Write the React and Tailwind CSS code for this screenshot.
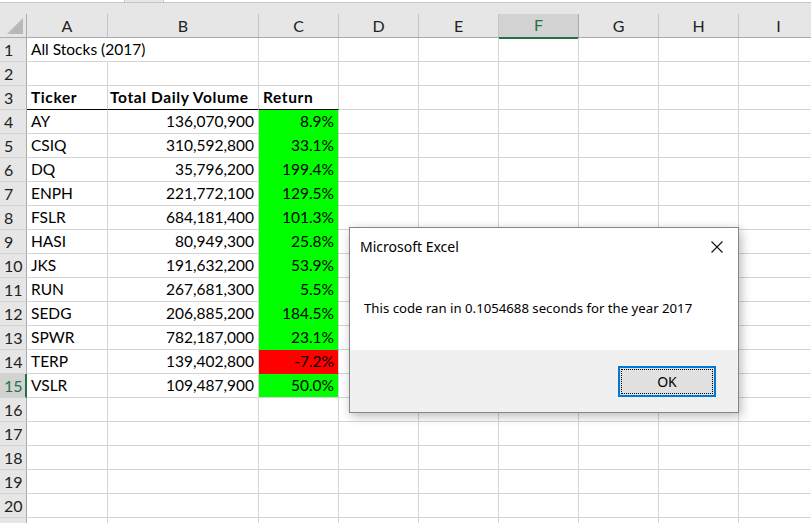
import React from "react";

const columns = [
  { letter: "A", width: "w-[81px]" },
  { letter: "B", width: "w-[151px]" },
  { letter: "C", width: "w-[80px]" },
  { letter: "D", width: "w-[80px]" },
  { letter: "E", width: "w-[80px]" },
  { letter: "F", width: "w-[80px]" },
  { letter: "G", width: "w-[80px]" },
  { letter: "H", width: "w-[80px]" },
  { letter: "I", width: "w-[80px]" },
];

const stocks = [
  ["AY", "136,070,900", "8.9%"],
  ["CSIQ", "310,592,800", "33.1%"],
  ["DQ", "35,796,200", "199.4%"],
  ["ENPH", "221,772,100", "129.5%"],
  ["FSLR", "684,181,400", "101.3%"],
  ["HASI", "80,949,300", "25.8%"],
  ["JKS", "191,632,200", "53.9%"],
  ["RUN", "267,681,300", "5.5%"],
  ["SEDG", "206,885,200", "184.5%"],
  ["SPWR", "782,187,000", "23.1%"],
  ["TERP", "139,402,800", "-7.2%"],
  ["VSLR", "109,487,900", "50.0%"],
];

// builds the cell contents for a given sheet row
const cellsFor = (row) => {
  if (row === 1) return [{ text: "All Stocks (2017)", overflow: true }];
  if (row === 3)
    return [
      { text: "Ticker", bold: true, line: true },
      { text: "Total Daily Volume", bold: true, line: true, tight: true },
      { text: "Return", bold: true, line: true },
    ];
  if (row >= 4 && row <= 15) {
    const [ticker, volume, ret] = stocks[row - 4];
    const negative = ret.startsWith("-");
    return [
      { text: ticker },
      { text: volume, right: true },
      {
        text: ret,
        right: true,
        fill: negative ? "red" : "green",
        last: row === 15,
      },
    ];
  }
  return [];
};

const Cell = ({ col, cell }) => {
  const c = cell || {};
  let cls = `${col.width} shrink-0 h-full flex items-center border-r border-b border-[#d4d4d4] whitespace-nowrap pt-[1px]`;
  if (c.line) cls += " border-b-black";
  if (c.fill === "green") cls += " bg-[#00ff00]";
  if (c.fill === "red") cls += " bg-[#ff0000]";
  if (c.fill && !c.last) cls += " border-b-transparent";
  if (c.overflow) cls += " border-r-transparent overflow-visible";
  else cls += " overflow-hidden";
  if (c.right) cls += " justify-end pr-[4px]";
  else if (c.tight) cls += " pl-[2px]";
  else cls += " pl-[4px]";
  if (c.bold) cls += " font-bold tracking-[0.6px]";
  return <div className={cls}>{c.text}</div>;
};

const Row = ({ row }) => {
  const cells = cellsFor(row);
  const selected = row === 15;
  return (
    <div className="flex h-[24px] shrink-0">
      <div
        className={
          selected
            ? "w-[27px] shrink-0 h-full flex items-center pl-[4px] pt-[1px] text-[16px] bg-[#d2d2d2] text-[#217346] border-r-2 border-r-[#217346] border-b border-b-[#d4d4d4]"
            : "w-[27px] shrink-0 h-full flex items-center pl-[4px] pt-[1px] text-[16px] bg-[#e6e6e6] text-[#222] border-r border-r-[#ababab] border-b border-b-[#d4d4d4]"
        }
      >
        {row <= 20 ? row : ""}
      </div>
      {columns.map((col, i) => (
        <Cell key={col.letter} col={col} cell={cells[i]} />
      ))}
    </div>
  );
};

const Dialog = () => (
  <div className="absolute left-[349px] top-[227px] w-[390px] h-[186px] border border-[#868686] bg-white flex flex-col shadow-[2px_3px_10px_rgba(0,0,0,0.28)] font-['Noto_Sans',sans-serif] text-black">
    <div className="flex-1 flex flex-col">
      <div className="h-[38px] flex items-center justify-between pl-[10px] pr-[15px]">
        <span className="text-[14px]">Microsoft Excel</span>
        <svg width="12" height="12" viewBox="0 0 12 12">
          <path d="M0.5 0.5 L11.5 11.5 M11.5 0.5 L0.5 11.5" stroke="#111" strokeWidth="1.1" />
        </svg>
      </div>
      <div className="pl-[14px] pt-[36px] text-[13.2px]">
        This code ran in 0.1054688 seconds for the year 2017
      </div>
    </div>
    <div className="h-[62px] bg-[#f0f0f0] flex justify-end items-start pt-[16px] pr-[22px]">
      <button className="w-[98px] h-[31px] border-2 border-[#0078d7] bg-[#e1e1e1] p-[1px]">
        <div className="w-full h-full border border-dotted border-black flex items-center justify-center text-[14px]">
          OK
        </div>
      </button>
    </div>
  </div>
);

export default function App() {
  const rows = Array.from({ length: 21 }, (_, i) => i + 1);
  return (
    <div className="relative w-[811px] h-[523px] overflow-hidden bg-white font-['Lato',sans-serif] text-[15.5px] text-black leading-none">
      <div className="h-[14px] bg-[#e6e6e6]">
        <div className="h-[3px] flex border-b border-[#c6c6c6]">
          <div className="w-[125px] bg-white border-r border-[#c6c6c6]" />
          <div className="w-[38px]" />
          <div className="flex-1 bg-white border-l border-[#c6c6c6]" />
        </div>
      </div>
      <div className="flex h-[24px] bg-[#e6e6e6] border-b border-[#ababab] text-[16px]">
        <div className="w-[27px] shrink-0 h-full border-r border-[#ababab] relative">
          <svg className="absolute left-[7px] top-[4px]" width="17" height="17" viewBox="0 0 17 17">
            <polygon points="16,0 16,16 0,16" fill="#b8b8b8" />
          </svg>
        </div>
        {columns.map((col) => (
          <div
            key={col.letter}
            className={
              col.letter === "F"
                ? `${col.width} shrink-0 h-[25px] flex items-center justify-center pb-[1px] bg-[#d2d2d2] text-[#217346] border-r border-r-[#ababab] border-b-2 border-b-[#217346]`
                : `${col.width} shrink-0 h-full flex items-center justify-center text-[#222] border-r border-[#c4c4c4]`
            }
          >
            {col.letter}
          </div>
        ))}
      </div>
      {rows.map((r) => (
        <Row key={r} row={r} />
      ))}
      <Dialog />
    </div>
  );
}
